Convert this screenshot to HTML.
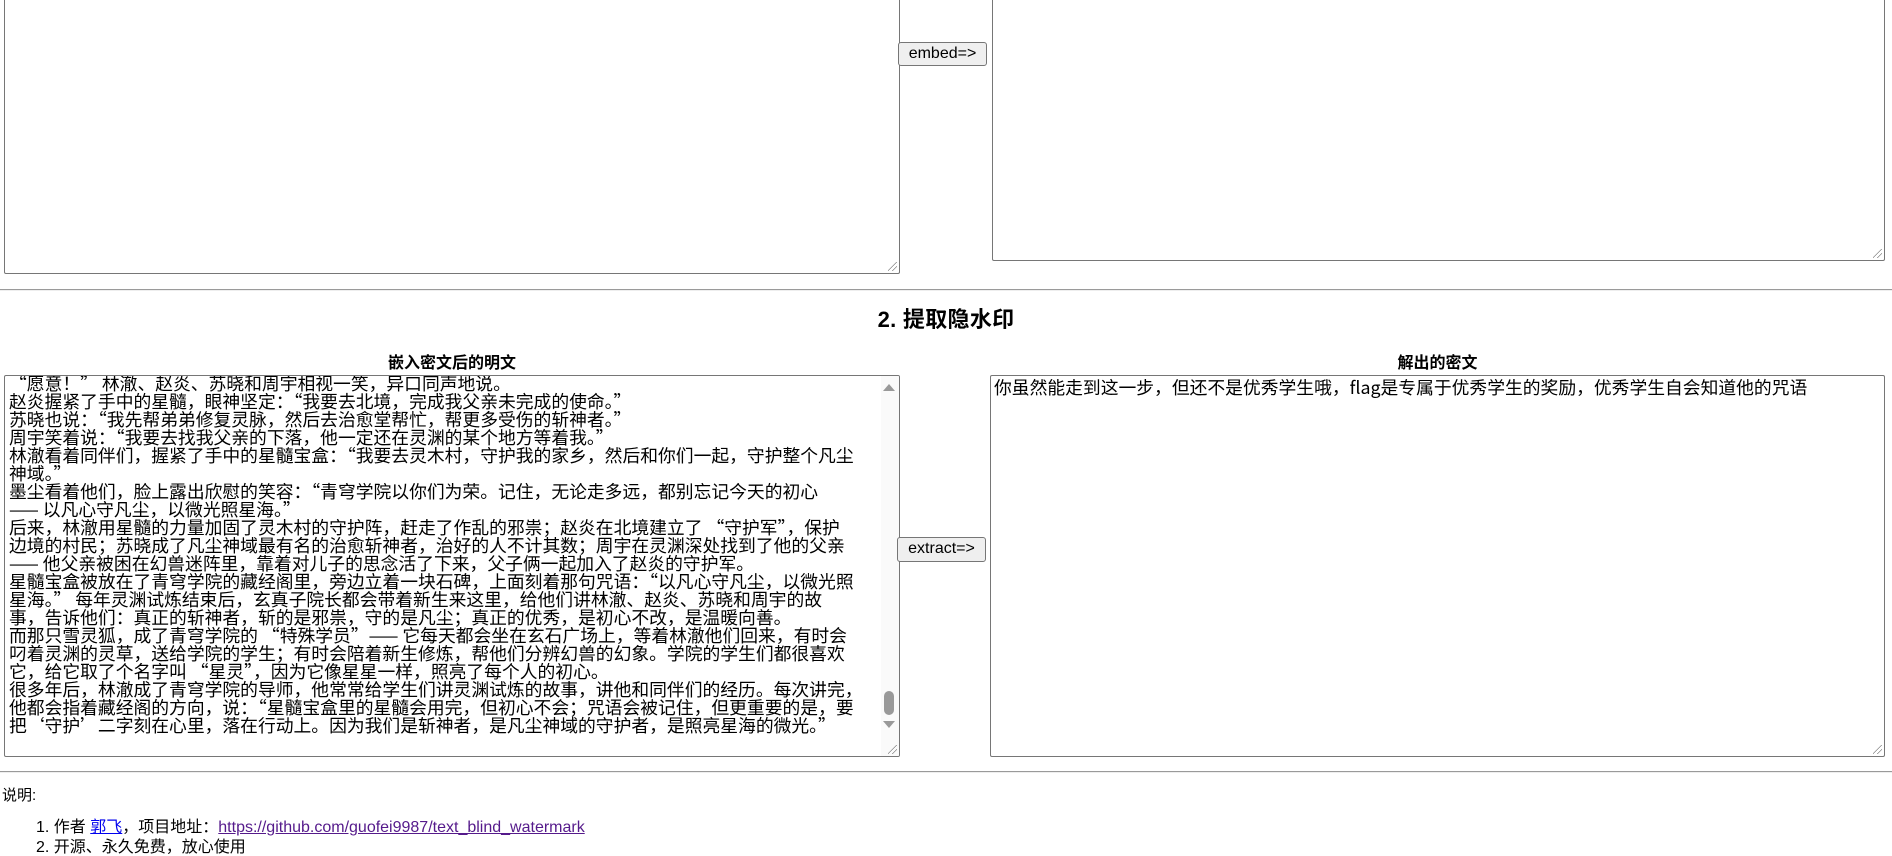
<!DOCTYPE html>
<html><head><meta charset="utf-8">
<style>
html,body{margin:0;padding:0;background:#fff;width:1892px;height:856px;overflow:hidden;position:relative;font-family:"Liberation Sans","Noto Sans CJK SC",sans-serif;}
.ta{position:absolute;border:1px solid #767676;background:#fff;box-sizing:border-box;overflow:hidden;border-radius:2px;}
.grip{position:absolute;right:2px;bottom:2px;width:9px;height:9px;
background:linear-gradient(135deg,transparent 0 45%,#888 45% 52%,transparent 52% 70%,#888 70% 77%,transparent 77%);}
.btn{position:absolute;background:#efefef;border:1px solid #767676;border-radius:3px;box-sizing:border-box;font:16px "Liberation Sans",sans-serif;color:#000;text-align:center;line-height:22px;}
.hr{position:absolute;left:0;width:1892px;height:0;border-top:1px solid #9a9a9a;border-bottom:1px solid #eee;}
.mono{font-family:"Noto Sans CJK SC","Liberation Mono",monospace;font-size:17.8px;line-height:18px;white-space:pre;color:#000;}
.lbl{position:absolute;font-weight:bold;font-size:16px;text-align:center;}
</style></head><body>

<div class="ta" style="left:4px;top:-10px;width:896px;height:284px;"><div class="grip"></div></div>
<div class="btn" style="left:898px;top:42px;width:89px;height:24px;">embed=&gt;</div>
<div class="ta" style="left:992px;top:-10px;width:893px;height:271px;"><div class="grip"></div></div>

<div class="hr" style="top:289px;"></div>
<div style="position:absolute;left:0;width:1892px;top:302px;text-align:center;font-weight:bold;font-size:22px;letter-spacing:0.3px;">2. 提取隐水印</div>

<div class="lbl" style="left:4px;width:896px;top:349px;">嵌入密文后的明文</div>
<div class="lbl" style="left:990px;width:895px;top:349px;">解出的密文</div>

<div class="ta" style="left:4px;top:375px;width:896px;height:382px;">
<div class="mono" style="position:absolute;left:4px;top:-2px;">“愿意！” 林澈、赵炎、苏晓和周宇相视一笑，异口同声地说。
赵炎握紧了手中的星髓，眼神坚定：“我要去北境，完成我父亲未完成的使命。”
苏晓也说：“我先帮弟弟修复灵脉，然后去治愈堂帮忙，帮更多受伤的斩神者。”
周宇笑着说：“我要去找我父亲的下落，他一定还在灵渊的某个地方等着我。”
林澈看着同伴们，握紧了手中的星髓宝盒：“我要去灵木村，守护我的家乡，然后和你们一起，守护整个凡尘
神域。”
墨尘看着他们，脸上露出欣慰的笑容：“青穹学院以你们为荣。记住，无论走多远，都别忘记今天的初心
—— 以凡心守凡尘，以微光照星海。”
后来，林澈用星髓的力量加固了灵木村的守护阵，赶走了作乱的邪祟；赵炎在北境建立了 “守护军”，保护
边境的村民；苏晓成了凡尘神域最有名的治愈斩神者，治好的人不计其数；周宇在灵渊深处找到了他的父亲
—— 他父亲被困在幻兽迷阵里，靠着对儿子的思念活了下来，父子俩一起加入了赵炎的守护军。
星髓宝盒被放在了青穹学院的藏经阁里，旁边立着一块石碑，上面刻着那句咒语：“以凡心守凡尘，以微光照
星海。” 每年灵渊试炼结束后，玄真子院长都会带着新生来这里，给他们讲林澈、赵炎、苏晓和周宇的故
事，告诉他们：真正的斩神者，斩的是邪祟，守的是凡尘；真正的优秀，是初心不改，是温暖向善。
而那只雪灵狐，成了青穹学院的 “特殊学员”—— 它每天都会坐在玄石广场上，等着林澈他们回来，有时会
叼着灵渊的灵草，送给学院的学生；有时会陪着新生修炼，帮他们分辨幻兽的幻象。学院的学生们都很喜欢
它，给它取了个名字叫 “星灵”，因为它像星星一样，照亮了每个人的初心。
很多年后，林澈成了青穹学院的导师，他常常给学生们讲灵渊试炼的故事，讲他和同伴们的经历。每次讲完，
他都会指着藏经阁的方向，说：“星髓宝盒里的星髓会用完，但初心不会；咒语会被记住，但更重要的是，要
把‘守护’二字刻在心里，落在行动上。因为我们是斩神者，是凡尘神域的守护者，是照亮星海的微光。”</div>
<div style="position:absolute;right:0;top:0;width:18px;height:380px;background:#fafafa;"></div>
<div style="position:absolute;right:4px;top:8px;width:0;height:0;border-left:6px solid transparent;border-right:6px solid transparent;border-bottom:7px solid #999;"></div>
<div style="position:absolute;right:4px;top:345px;width:0;height:0;border-left:6px solid transparent;border-right:6px solid transparent;border-top:7px solid #999;"></div>
<div style="position:absolute;right:5px;top:315px;width:10px;height:24px;background:#999;border-radius:5px;"></div>
<div class="grip"></div>
</div>

<div class="btn" style="left:897px;top:537px;width:89px;height:25px;">extract=&gt;</div>

<div class="ta" style="left:990px;top:375px;width:895px;height:382px;">
<div class="mono" style="position:absolute;left:3px;top:2px;">你虽然能走到这一步，但还不是优秀学生哦，flag是专属于优秀学生的奖励，优秀学生自会知道他的咒语</div>
<div class="grip"></div>
</div>

<div class="hr" style="top:771px;"></div>
<div style="position:absolute;left:2px;top:784px;font-size:15px;">说明:</div>
<div style="position:absolute;left:36px;top:818px;font-size:16px;line-height:20px;">
<div>1. 作者 <span style="color:#0000ee;text-decoration:underline;">郭飞</span>，项目地址：<span style="color:#551a8b;text-decoration:underline;">https://github.com/guofei9987/text_blind_watermark</span></div>
<div>2. 开源、永久免费，放心使用</div>
</div>
</body></html>
